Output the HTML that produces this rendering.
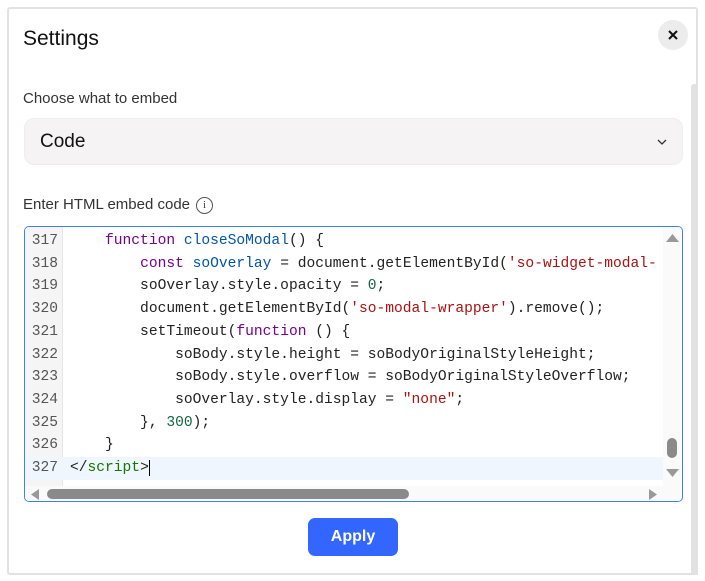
<!DOCTYPE html>
<html><head><style>
*{margin:0;padding:0;box-sizing:border-box}
body{width:705px;height:581px;background:#fff;position:relative;overflow:hidden;font-family:"Liberation Sans",sans-serif;color:#222}
.frame{position:absolute;left:7px;top:7px;width:691px;height:568px;border:2px solid #e2e2e2;border-radius:3px;background:#fff}
.vs{position:absolute;left:691px;top:84px;width:7px;height:491px;background:#e2e2e2;border-radius:3px 0 0 0}
.title{position:absolute;left:23px;top:27px;font-size:21px;color:#111}
.close{position:absolute;left:658px;top:20px;width:30px;height:30px;border-radius:50%;background:#ececec}
.lbl{position:absolute;left:23px;font-size:15px;color:#333}
.sel{position:absolute;left:24px;top:118px;width:659px;height:47px;background:#f5f3f3;border-radius:10px;border:1px solid #eee}
.sel span{position:absolute;left:15px;top:12px;font-size:19px;color:#111}
.info{display:inline-block;width:17px;height:17px;border:1.5px solid #555;border-radius:50%;font-size:11px;text-align:center;line-height:14px;vertical-align:middle;margin-left:6px;font-family:"Liberation Serif",serif;color:#444}
.code{position:absolute;left:24px;top:226px;width:659px;height:276px;border:1px solid #3b82f6;border-radius:5px;overflow:hidden;background:#fff}
.gut{position:absolute;left:0;top:0;width:38px;height:259px;background:#f5f5f5;border-right:1px solid #e6e6e6}
.lines{position:absolute;left:0;top:3px;font-family:"Liberation Mono",monospace;font-size:14.6px;line-height:22.7px;white-space:pre}
.ln{display:inline-block;width:33px;text-align:right;color:#555;margin-right:12px}
.active{background:#eff6fd;width:638px}
.k{color:#770088}.d{color:#0055aa}.s{color:#aa1111}.n{color:#116644}.t{color:#117700}
.vsb{position:absolute;left:638px;top:0;width:19px;height:259px;background:#fafafa}
.hsb{position:absolute;left:0;top:259px;width:657px;height:16px;background:#fafafa}
</style></head><body>
<div class="frame"></div>
<div class="vs"></div>
<div class="title">Settings</div>
<div class="close"><svg style="position:absolute;left:10px;top:10px" width="10" height="10"><path d="M1 1L9 9M9 1L1 9" stroke="#111" stroke-width="2"/></svg></div>
<div class="lbl" style="top:90px">Choose what to embed</div>
<div class="sel"><span>Code</span><svg style="position:absolute;left:632px;top:20px" width="10" height="7"><path d="M1 1l4 4 4-4" stroke="#333" stroke-width="1.3" fill="none"/></svg></div>
<div class="lbl" style="top:196px">Enter HTML embed code<span class="info">i</span></div>
<div class="code">
<div class="gut"></div>
<div class="lines"><div><span class="ln">317</span>    <span class="k">function</span> <span class="d">closeSoModal</span>() {</div><div><span class="ln">318</span>        <span class="k">const</span> <span class="d">soOverlay</span> = document.getElementById(<span class="s">'so-widget-modal-</span></div><div><span class="ln">319</span>        soOverlay.style.opacity = <span class="n">0</span>;</div><div><span class="ln">320</span>        document.getElementById(<span class="s">'so-modal-wrapper'</span>).remove();</div><div><span class="ln">321</span>        setTimeout(<span class="k">function</span> () {</div><div><span class="ln">322</span>            soBody.style.height = soBodyOriginalStyleHeight;</div><div><span class="ln">323</span>            soBody.style.overflow = soBodyOriginalStyleOverflow;</div><div><span class="ln">324</span>            soOverlay.style.display = <span class="s">"none"</span>;</div><div><span class="ln">325</span>        }, <span class="n">300</span>);</div><div><span class="ln">326</span>    }</div><div class="active"><span class="ln">327</span>&lt;/<span class="t">script</span>&gt;<span style="border-left:1px solid #000"></span></div></div>
<div class="vsb">
<svg style="position:absolute;left:3px;top:6px" width="13" height="9"><path d="M0 9L6.5 1 13 9z" fill="#999"/></svg>
<div style="position:absolute;left:4px;top:211px;width:10px;height:20px;border-radius:5px;background:#8a8a8a"></div>
<svg style="position:absolute;left:3px;top:242px" width="13" height="9"><path d="M0 0L6.5 8 13 0z" fill="#999"/></svg>
</div>
<div class="hsb">
<svg style="position:absolute;left:5px;top:3px" width="9" height="11"><path d="M9 0L1 5.5 9 11z" fill="#999"/></svg>
<div style="position:absolute;left:22px;top:3px;width:362px;height:10px;border-radius:5px;background:#8a8a8a"></div>
<svg style="position:absolute;left:624px;top:3px" width="9" height="11"><path d="M0 0L8 5.5 0 11z" fill="#999"/></svg>
</div>
</div>
<div style="position:absolute;left:308px;top:518px;width:90px;height:38px;background:#3366ff;border-radius:7px;color:#fff;font-weight:bold;font-size:16px;text-align:center;line-height:38px">Apply</div>
</body></html>
